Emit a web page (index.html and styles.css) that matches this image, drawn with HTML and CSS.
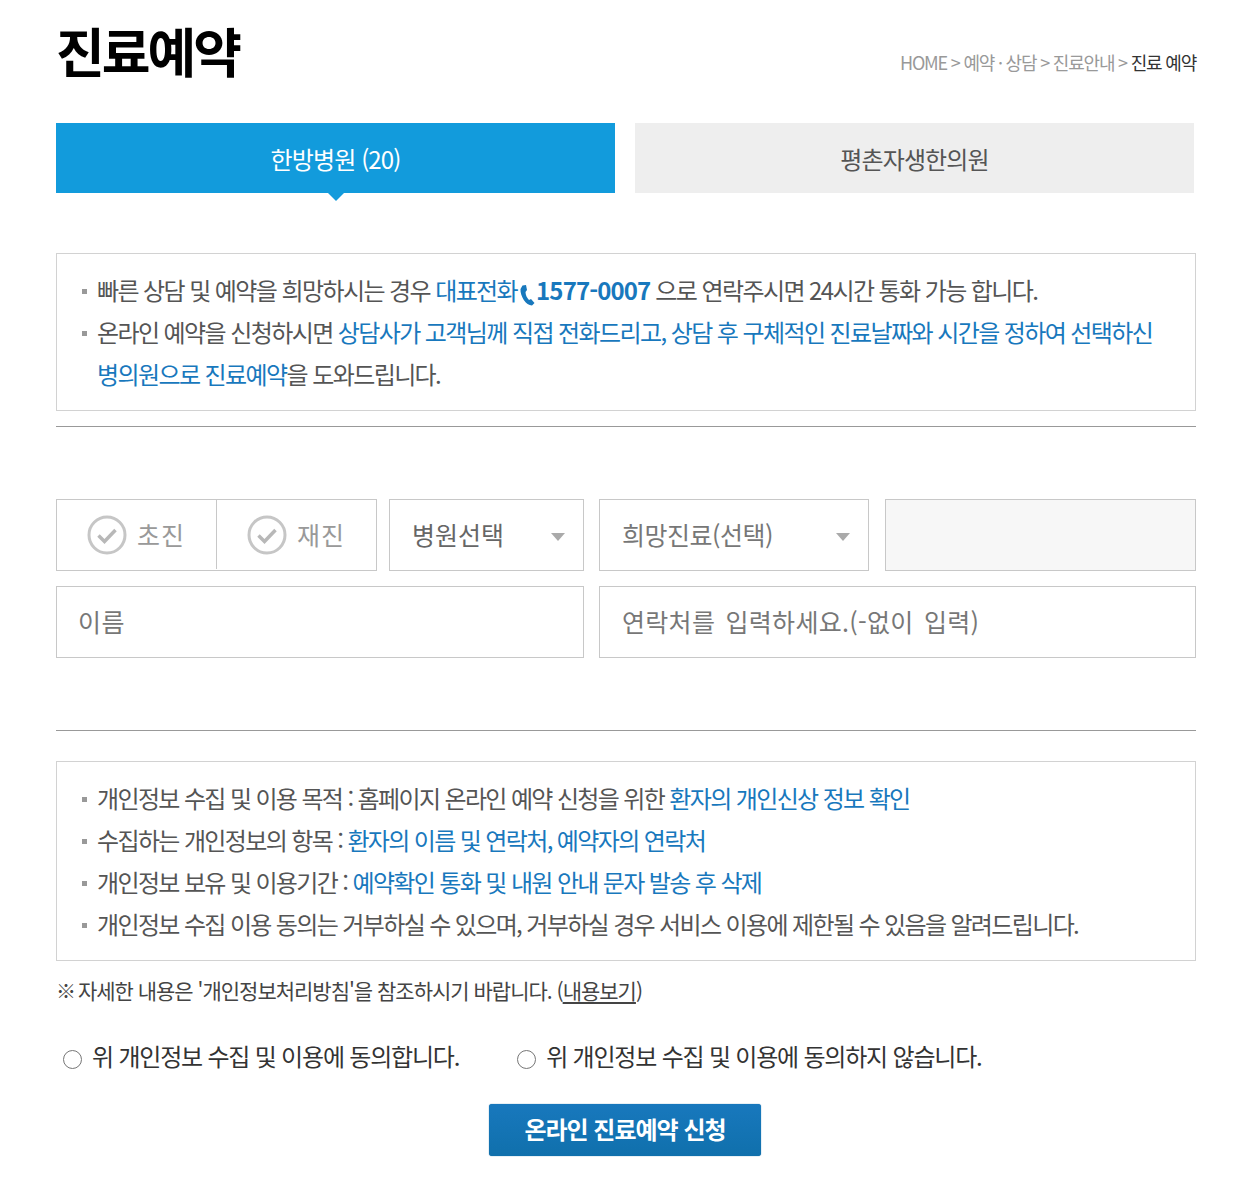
FILE: index.html
```html
<!DOCTYPE html>
<html lang="ko">
<head>
<meta charset="utf-8">
<title>진료예약</title>
<link rel="stylesheet" href="styles.css">
</head>
<body>
<div class="page">
  <header class="head">
    <h1 class="title">진료예약</h1>
    <nav class="crumbs">HOME &gt; 예약 · 상담 &gt; 진료안내 &gt; <b class="here">진료 예약</b></nav>
  </header>
  <div class="tabs">
    <a class="tab on">한방병원 (20)</a>
    <a class="tab">평촌자생한의원</a>
  </div>
  <ul class="box first">
    <li>빠른 상담 및 예약을 희망하시는 경우 <em>대표전화<svg class="phone" viewBox="0 0 16 22" width="16" height="22"><path d="M3.500 1.500 L7 1 L8 6 L6.500 8 C6.500 11 8 14 10 16 L12 15 L15.500 19 L13 21.500 C7 21.500 1 12 1.500 5 Z" fill="#1878bd"/></svg><strong>1577-0007</strong></em> 으로 연락주시면 24시간 통화 가능 합니다.</li>
    <li>온라인 예약을 신청하시면 <em>상담사가 고객님께 직접 전화드리고, 상담 후 구체적인 진료날짜와 시간을 정하여 선택하신 병의원으로 진료예약</em>을 도와드립니다.</li>
  </ul>
  <hr class="rule">
  <form class="form">
    <div class="row">
      <div class="checks">
        <label class="check"><svg class="tick" viewBox="0 0 40 40" width="40" height="40"><circle cx="20" cy="20" r="18" fill="none" stroke="#c6c6c6" stroke-width="3"/><path d="M11.500 20.500 L17.500 26.500 L28.500 15" fill="none" stroke="#b8b8b8" stroke-width="3.500"/></svg>초진</label>
        <label class="check"><svg class="tick" viewBox="0 0 40 40" width="40" height="40"><circle cx="20" cy="20" r="18" fill="none" stroke="#c6c6c6" stroke-width="3"/><path d="M11.500 20.500 L17.500 26.500 L28.500 15" fill="none" stroke="#b8b8b8" stroke-width="3.500"/></svg>재진</label>
      </div>
      <div class="field select w195">병원선택</div>
      <div class="field select w270">희망진료(선택)</div>
      <div class="field off"></div>
    </div>
    <div class="row">
      <div class="field name">이름</div>
      <div class="field tel">연락처를 입력하세요.(-없이 입력)</div>
    </div>
  </form>
  <hr class="rule second">
  <ul class="box">
    <li>개인정보 수집 및 이용 목적 : 홈페이지 온라인 예약 신청을 위한 <em>환자의 개인신상 정보 확인</em></li>
    <li>수집하는 개인정보의 항목 : <em>환자의 이름 및 연락처, 예약자의 연락처</em></li>
    <li>개인정보 보유 및 이용기간 : <em>예약확인 통화 및 내원 안내 문자 발송 후 삭제</em></li>
    <li>개인정보 수집 이용 동의는 거부하실 수 있으며, 거부하실 경우 서비스 이용에 제한될 수 있음을 알려드립니다.</li>
  </ul>
  <p class="note"><span class="mark">※</span> 자세한 내용은 '개인정보처리방침'을 참조하시기 바랍니다. (<u>내용보기</u>)</p>
  <div class="agree">
    <label class="radio"><span class="dot"></span>위 개인정보 수집 및 이용에 동의합니다.</label>
    <label class="radio"><span class="dot"></span>위 개인정보 수집 및 이용에 동의하지 않습니다.</label>
  </div>
  <div class="actions"><button class="submit" type="button">온라인 진료예약 신청</button></div>
</div>
</body>
</html>
```
FILE: styles.css
```css
* { box-sizing: border-box; }
html, body { margin: 0; background: #fff; }
body { font-family: "Noto Sans CJK KR", "Noto Sans", sans-serif; color: #555; }
.page { width: 1234px; padding: 0 38px 27px 56px; }
.head { display: flex; justify-content: space-between; align-items: flex-start; height: 123px; }
.title { margin: 13px 0 0; font-size: 53px; line-height: 74px; font-weight: 700; color: #000; letter-spacing: -3px; }
.crumbs { margin-top: 49px; font-size: 18px; line-height: 26px; color: #999; letter-spacing: -1.200px; white-space: nowrap; }
.here { font-weight: 400; color: #333; }
.tabs { display: flex; gap: 20px; width: 1138px; }
.tab { position: relative; flex: 1; height: 70px; display: flex; align-items: center; justify-content: center; background: #eee; color: #555; font-size: 24px; letter-spacing: -.900px; }
.tab.on { background: #129bdc; color: #fff; }
.tab.on::after { content: ""; position: absolute; left: 50%; top: 100%; margin-left: -8px; border: 8px solid transparent; border-bottom: 0; border-top-color: #129bdc; }
.box { margin: 0; padding: 15px 40px 15px 40px; list-style: none; border: 1px solid #d2d2d2; font-size: 24px; line-height: 42px; letter-spacing: -1.630px; color: #555; }
.box.first { margin-top: 60px; letter-spacing: -1.590px; }
.box li { position: relative; }
.box li::before { content: ""; position: absolute; left: -15px; top: 20px; width: 5px; height: 5px; background: #999; }
.box em { font-style: normal; color: #1878bd; }
.box strong { font-weight: 700; letter-spacing: -.900px; }
.phone { display: inline-block; vertical-align: -6px; margin: 0 1px 0 2px; }
.rule { margin: 15px 0 0; height: 1px; border: 0; background: #999; }
.rule.second { margin-top: 72px; margin-bottom: 30px; }
.form { margin-top: 72px; display: flex; flex-direction: column; gap: 15px; }
.row { display: flex; gap: 15px; }
.checks { display: flex; width: 321px; height: 72px; margin-right: -3px; border: 1px solid #c8c8c8; }
.check { flex: 1; display: flex; align-items: center; justify-content: center; gap: 10px; padding-bottom: 2px; font-size: 25px; letter-spacing: 1px; color: #999; }
.tick { margin: 2px 0 0 -1px; }
.check + .check { border-left: 1px solid #c8c8c8; margin: 0 0 1px; }
.field { height: 72px; padding: 0 0 2px 22px; display: flex; align-items: center; border: 1px solid #c8c8c8; font-size: 25px; color: #777; }
.select { position: relative; }
.select::after { content: ""; position: absolute; right: 18px; top: 33px; border: 7px solid transparent; border-bottom: 0; border-top: 8px solid #aaa; }
.w195 { width: 195px; letter-spacing: 0; color: #666; }
.w270 { width: 270px; letter-spacing: -.500px; }
.off { width: 311px; margin-left: 1px; background: #f7f7f7; }
.name { width: 528px; padding-left: 21px; letter-spacing: .500px; }
.tel { width: 597px; letter-spacing: .300px; word-spacing: 3px; }
.note { margin: 15px 0 0; font-size: 21px; line-height: 28px; letter-spacing: -1px; color: #444; }
.mark { font-size: 20px; line-height: 1; letter-spacing: -3px; }
.note u { text-underline-offset: 3px; }
.agree { display: flex; gap: 58px; margin-top: 35px; padding-left: 7px; }
.radio { display: flex; align-items: center; gap: 10px; font-size: 24px; line-height: 34px; letter-spacing: -1.200px; color: #333; }
.dot { width: 19px; height: 19px; margin-top: 7px; border: 1.500px solid #767676; border-radius: 50%; }
.actions { display: flex; justify-content: center; margin-top: 31px; padding-right: 2px; }
.submit { width: 272px; height: 52px; padding: 0 0 4px; border: 0; border-radius: 3px; background: #1878bd; background-image: linear-gradient(#1878bd, #1070ac); box-shadow: 0 0 1px #0e659b; color: #fff; font: 700 24px "Noto Sans CJK KR", sans-serif; letter-spacing: -1px; }
```
